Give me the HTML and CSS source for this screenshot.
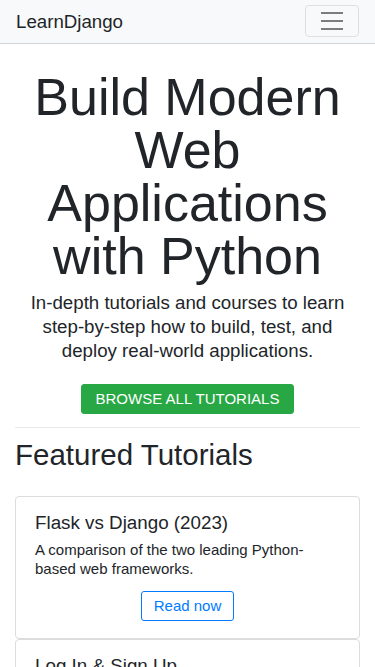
FILE: index.html
```html
<!DOCTYPE html>
<html lang="en">
<head>
    <meta charset="utf-8" />
    <meta name="viewport" content="width=device-width, initial-scale=1" />
    <title>LearnDjango</title>
    <link rel="stylesheet" href="styles.css">
</head>
<body>

<nav class="navbar">
    <a class="navbar-brand" href="#">LearnDjango</a>
    <button class="navbar-toggler" type="button" aria-label="Toggle navigation">
        <svg width="30" height="30" viewBox="0 0 30 30" aria-hidden="true">
            <path d="M4 7h22M4 15h22M4 23h22" stroke="rgba(0,0,0,0.5)" stroke-width="2" stroke-linecap="butt" />
        </svg>
    </button>
</nav>

<main class="container">
    <section class="hero">
        <h1 class="hero-title">Build Modern Web Applications with Python</h1>
        <p class="lead">In-depth tutorials and courses to learn step-by-step how to build, test, and deploy real-world applications.</p>
        <a class="btn btn-success" href="#">BROWSE ALL TUTORIALS</a>
    </section>

    <hr class="divider">

    <h2 class="section-title">Featured Tutorials</h2>

    <div class="card-list">
        <article class="card">
            <div class="card-body">
                <h5 class="card-title">Flask vs Django (2023)</h5>
                <p class="card-text">A comparison of the two leading Python-based web frameworks.</p>
                <div class="card-action">
                    <a class="btn btn-outline" href="#">Read now</a>
                </div>
            </div>
        </article>
        <article class="card">
            <div class="card-body">
                <h5 class="card-title">Log In &amp; Sign Up</h5>
                <p class="card-text">Add user authentication to a Django project with login, logout and signup pages.</p>
                <div class="card-action">
                    <a class="btn btn-outline" href="#">Read now</a>
                </div>
            </div>
        </article>
    </div>
</main>

</body>
</html>
```

FILE: styles.css
```css
* {
    margin: 0;
    padding: 0;
    box-sizing: border-box;
}

body {
    font-family: "Liberation Sans", Arial, sans-serif;
    color: #212529;
    background-color: #fff;
}

a {
    text-decoration: none;
}

.navbar {
    display: flex;
    align-items: center;
    justify-content: space-between;
    height: 44px;
    padding: 0 16px;
    background-color: #f8f9fa;
    border-bottom: 1px solid #d4d4d4;
}

.navbar-brand {
    font-size: 18.7px;
    color: #212529;
}

.navbar-toggler {
    display: flex;
    align-items: center;
    justify-content: center;
    width: 54px;
    height: 32px;
    background: transparent;
    border: 1px solid rgba(0, 0, 0, 0.1);
    border-radius: 4px;
    margin-top: -1px;
}

.container {
    padding: 0 15px;
}

.hero {
    text-align: center;
    padding-top: 27px;
}

.hero-title {
    font-size: 52px;
    font-weight: 400;
    line-height: 53px;
}

.lead {
    font-size: 18.7px;
    line-height: 24px;
    margin-top: 8px;
}

.btn {
    display: inline-block;
    font-size: 15px;
    line-height: 18px;
    border-radius: 3px;
}

.btn-success {
    margin-top: 21px;
    padding: 5px 14px;
    color: #fff;
    background-color: #28a745;
    border: 1px solid #28a745;
}

.divider {
    margin-top: 13px;
    border: 0;
    border-top: 1px solid #e9e9e9;
}

.section-title {
    font-size: 29.5px;
    font-weight: 400;
    line-height: 36px;
    margin-top: 9px;
}

.card-list {
    margin-top: 23px;
}

.card {
    border: 1px solid #dcdcdc;
    border-radius: 4px;
    background-color: #fff;
}

.card-body {
    padding: 14px 19px 17px;
}

.card-title {
    font-size: 18.8px;
    font-weight: 400;
    line-height: 24px;
}

.card-text {
    font-size: 15px;
    line-height: 19px;
    margin-top: 5px;
}

.card-action {
    text-align: center;
    margin-top: 13px;
}

.btn-outline {
    padding: 5px 12px;
    color: #007bff;
    border: 1px solid #007bff;
}
```
